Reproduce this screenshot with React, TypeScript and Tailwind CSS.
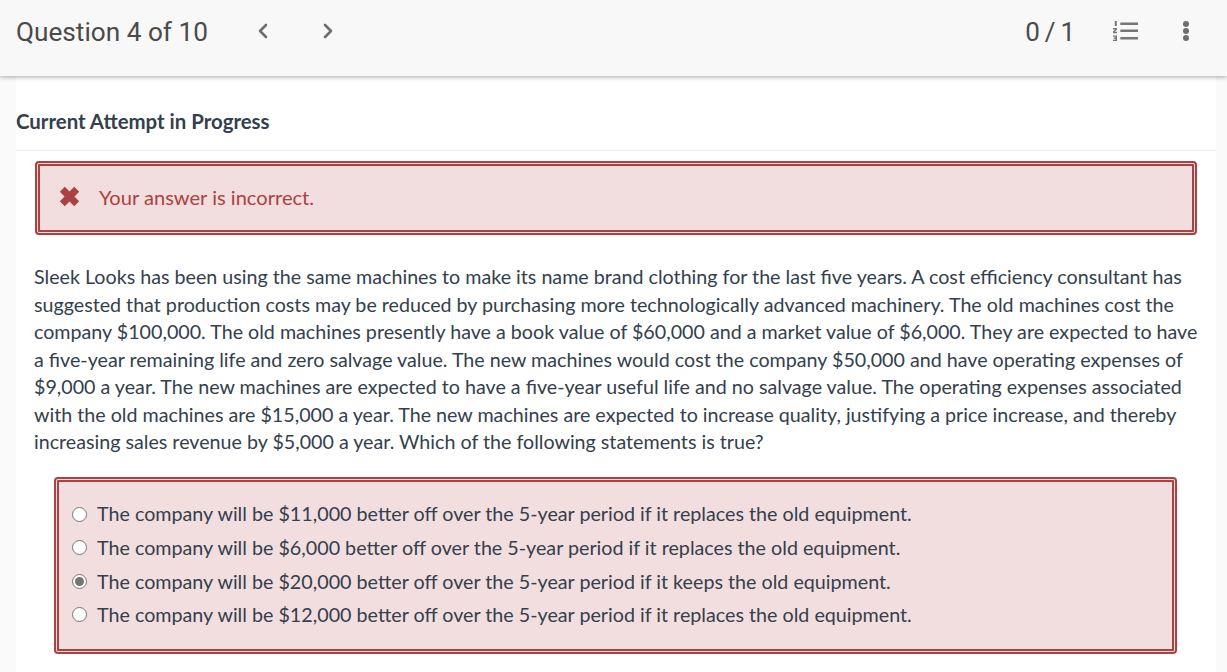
import React from "react";
import { ChevronLeft, ChevronRight } from "lucide-react";

const options = [
  { text: "The company will be $11,000 better off over the 5-year period if it replaces the old equipment.", checked: false },
  { text: "The company will be $6,000 better off over the 5-year period if it replaces the old equipment.", checked: false },
  { text: "The company will be $20,000 better off over the 5-year period if it keeps the old equipment.", checked: true },
  { text: "The company will be $12,000 better off over the 5-year period if it replaces the old equipment.", checked: false },
];

const Radio = ({ checked }: { checked: boolean }) => (
  <span className="flex h-[15px] w-[15px] shrink-0 items-center justify-center rounded-full border border-[#767676] bg-white">
    {checked && <span className="h-[9px] w-[9px] rounded-full bg-[#757575]" />}
  </span>
);

const ListIcon = () => (
  <svg width="25" height="20" viewBox="0 0 25 20" fill="#767676" className="block">
    <rect x="7.300" y="1.500" width="17.700" height="2.500" />
    <rect x="7.300" y="8.500" width="17.700" height="2.500" />
    <rect x="7.300" y="16" width="17.700" height="2.500" />
    <rect x="1.800" y="0" width="2" height="5" />
    <path d="M0 7h4v1.600L1.800 10.800H4V12.200H0v-1.600L2.200 8.400H0z" />
    <path d="M0 14.500h4V20H0v-1.300h2.500v-.8H.8v-1.300h1.700v-.8H0z" />
  </svg>
);

const App: React.FC = () => {
  return (
    <div className="h-[672px] overflow-hidden bg-[#fafafa] font-['Lato',sans-serif]">
      <header className="relative z-10 flex h-[76px] items-start bg-[#f8f8f8] pl-4 pr-[38px] pt-[14px] shadow-[0_1px_5px_rgba(0,0,0,0.35)]">
        <span className="font-['Roboto',sans-serif] text-[26.200px] leading-[36px] text-[#4a4a4a]">Question 4 of 10</span>
        <div className="ml-[43px] mt-[5px] flex gap-[41px] text-[#6e6e6e]">
          <ChevronLeft size={24} strokeWidth={2.600} />
          <ChevronRight size={24} strokeWidth={2.600} />
        </div>
        <span className="ml-auto font-['Roboto',sans-serif] text-[26px] leading-[36px] tracking-[-0.2px] [word-spacing:-1px] text-[#4a4a4a]">0 / 1</span>
        <div className="ml-[38px] mt-[7px]">
          <ListIcon />
        </div>
        <div className="ml-[45px] mt-[7px] flex flex-col gap-[1px]">
          <span className="h-[6px] w-[6px] rounded-full bg-[#6e6e6e]" />
          <span className="h-[6px] w-[6px] rounded-full bg-[#6e6e6e]" />
          <span className="h-[6px] w-[6px] rounded-full bg-[#6e6e6e]" />
        </div>
      </header>

      <main className="mx-4 mr-[11px] h-[596px] bg-white">
        <h2 className="flex h-[75px] items-end border-b border-[#ececec] pb-[15px] text-[20.400px] font-bold leading-[28px] text-[#33404d]">
          Current Attempt in Progress
        </h2>

        <div className="mx-[19px] mt-[10px] flex h-[74px] items-center rounded-[4px] border-[5px] border-double border-[#ad4141] bg-[#f2dede] pl-[19px] text-[#ad4141]">
          <svg width="21" height="21" viewBox="0 0 20 20" fill="currentColor" className="-mt-[3px]">
            <path d="M5.500.800 10 5.300 14.500.800l4.700 4.700L14.700 10l4.500 4.500-4.700 4.700-4.500-4.500-4.500 4.500-4.700-4.700L5.300 10 .800 5.500z" />
          </svg>
          <span className="-mt-[2px] ml-[19px] text-[20.100px] leading-[28px]">Your answer is incorrect.</span>
        </div>

        <p className="ml-[18px] mr-[14px] mt-[28px] text-[19.680px] leading-[27.500px] text-[#33404d]">
          Sleek Looks has been using the same machines to make its name brand clothing for the last five years. A cost efficiency consultant has suggested that production costs may be reduced by purchasing more technologically advanced machinery. The old machines cost the company $100,000. The old machines presently have a book value of $60,000 and a market value of $6,000. They are expected to have a five-year remaining life and zero salvage value. The new machines would cost the company $50,000 and have operating expenses of $9,000 a year. The new machines are expected to have a five-year useful life and no salvage value. The operating expenses associated with the old machines are $15,000 a year. The new machines are expected to increase quality, justifying a price increase, and thereby increasing sales revenue by $5,000 a year. Which of the following statements is true?
        </p>

        <div className="ml-[38px] mr-[39px] mt-[21px] flex h-[177px] flex-col justify-center rounded-[4px] border-[5px] border-double border-[#ad4141] bg-[#f2dede] pb-[1px] pl-[13px]">
          {options.map((option) => (
            <label key={option.text} className="flex h-[33.670px] items-center gap-[10px] text-[19.720px] text-[#33404d]">
              <Radio checked={option.checked} />
              <span>{option.text}</span>
            </label>
          ))}
        </div>
      </main>
    </div>
  );
};

export default App;
